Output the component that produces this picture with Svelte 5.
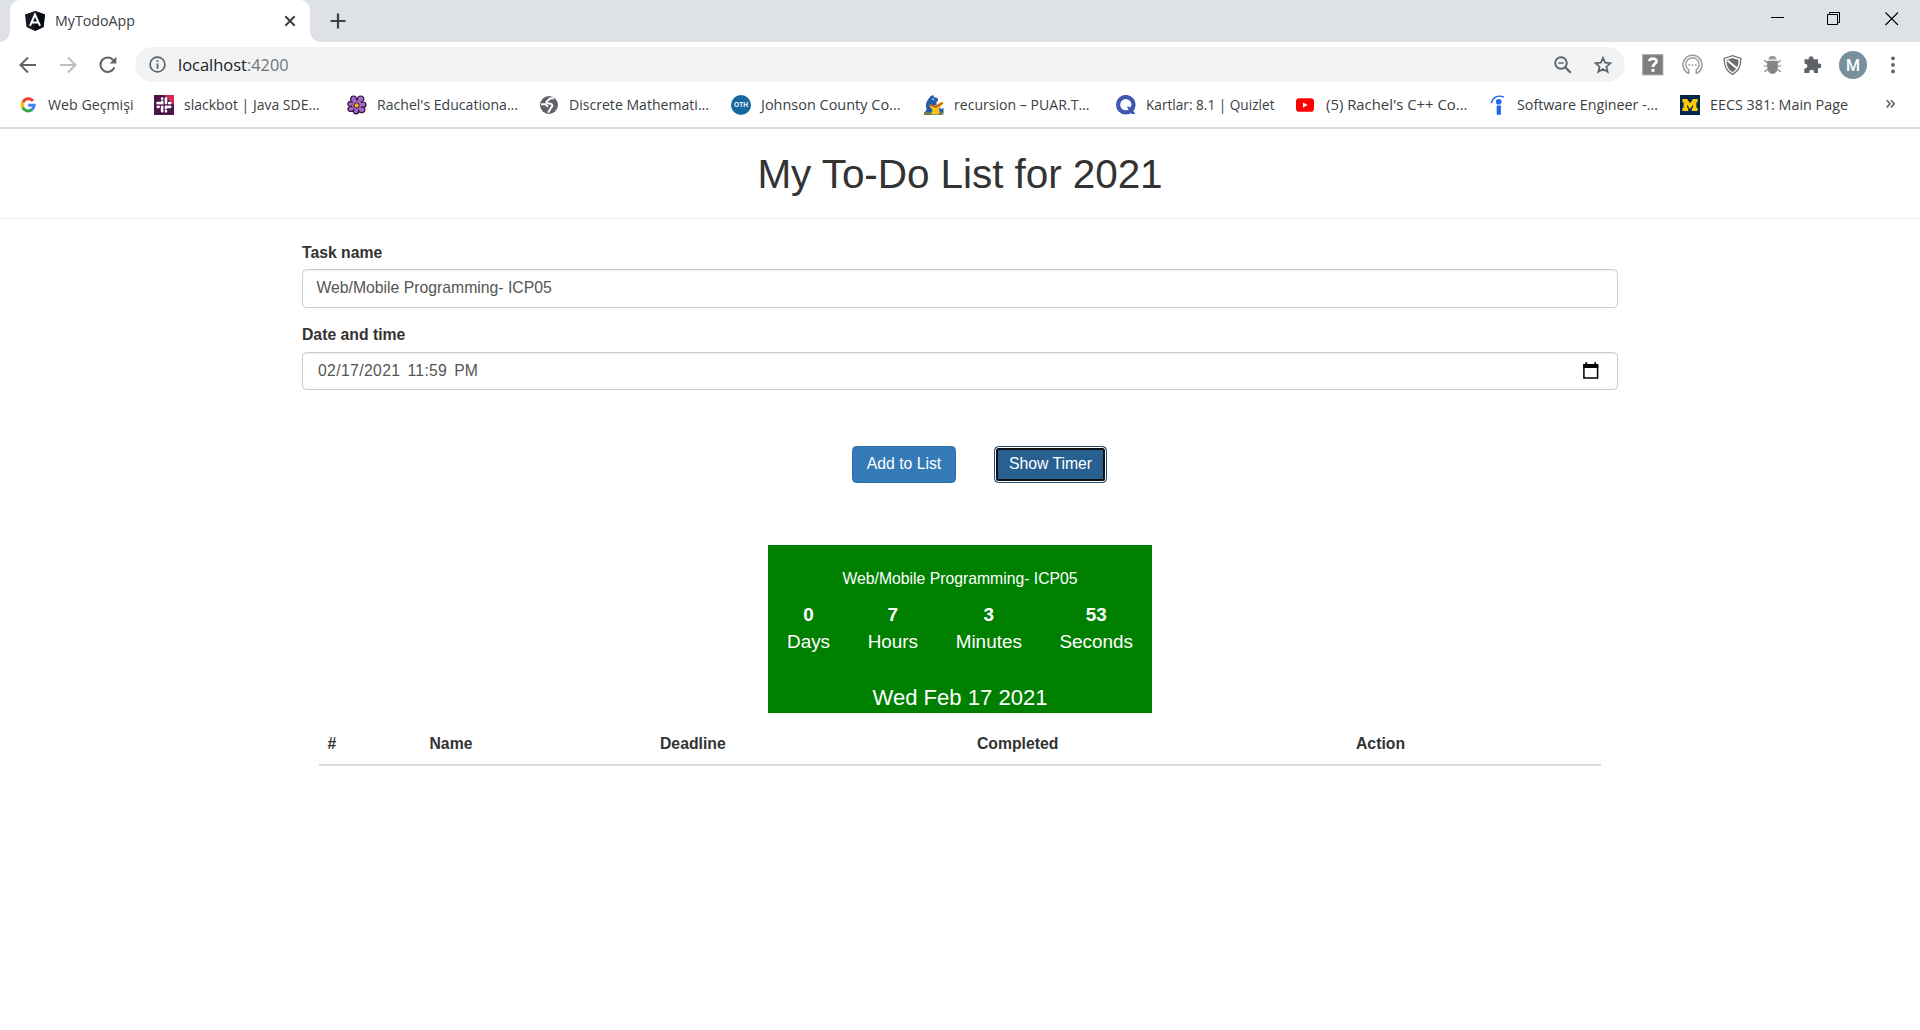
<script>
  const bookmarks = [
    { icon: 'google', text: 'Web Geçmişi', w: 85.5 },
    { icon: 'slack', text: 'slackbot | Java SDE...', w: 135.5 },
    { icon: 'flower', text: "Rachel's Educationa...", w: 141 },
    { icon: 'globe', text: 'Discrete Mathemati...', w: 140 },
    { icon: 'oth', text: 'Johnson County Co...', w: 139.5 },
    { icon: 'gator', text: 'recursion – PUAR.T...', w: 135.5 },
    { icon: 'quizlet', text: 'Kartlar: 8.1 | Quizlet', w: 128.5 },
    { icon: 'youtube', text: "(5) Rachel's C++ Co...", w: 141.5 },
    { icon: 'indeed', text: 'Software Engineer -...', w: 141 },
    { icon: 'michigan', text: 'EECS 381: Main Page', w: 138 }
  ];
  const units = [
    { n: 0, label: 'Days' },
    { n: 7, label: 'Hours' },
    { n: 3, label: 'Minutes' },
    { n: 53, label: 'Seconds' }
  ];
  const task = 'Web/Mobile Programming- ICP05';
</script>

{#snippet label(text, w, cls)}
  <svg class="label {cls}" width={w} height="24"><text x="0" y="17" textLength={w} lengthAdjust="spacingAndGlyphs">{text}</text></svg>
{/snippet}

{#snippet favicon(name)}
  <svg class="fav" width="20" height="20" viewBox="0 0 20 20">
    {#if name === 'google'}
      <g fill="none" stroke-width="3">
        <path d="M15.1 5.9A6 6 0 0 0 5 7.3" stroke="#ea4335" />
        <path d="M5 7.1A6 6 0 0 0 5 12.9" stroke="#fbbc05" />
        <path d="M4.8 12.6A6 6 0 0 0 14.1 14.4" stroke="#34a853" />
        <path d="M10.2 10.2H16.2A6 6 0 0 1 13.8 14.7" stroke="#4285f4" />
      </g>
    {:else if name === 'slack'}
      <rect width="20" height="20" fill="#4a154b" />
      <path d="M10 0H20V10Z" fill="#d72b57" />
      <g stroke="#fff" stroke-width="2.8" stroke-linecap="round">
        <path d="M8.2 3.6V3.7M8.2 7V8.2H3.6M11.9 3.6V8.2M15.3 8.2H16.2M3.8 11.8H4.6M8.2 11.8V16.2M11.9 16.2V16.3M11.9 13V11.8H16.2" fill="none" />
      </g>
      <path d="M10 3V17M3 10H17" stroke="#4a154b" stroke-width=".5" />
    {:else if name === 'flower'}
      <g fill="#a868c8" stroke="#2c1638" stroke-width="1.2">
        <ellipse cx="6.6" cy="4.4" rx="2.9" ry="3.4" /><ellipse cx="13.6" cy="4" rx="3.2" ry="3" />
        <ellipse cx="16" cy="9.7" rx="3" ry="2.7" /><ellipse cx="14.6" cy="14.8" rx="3.3" ry="2.8" />
        <ellipse cx="9" cy="16" rx="2.7" ry="2.9" /><ellipse cx="4" cy="14" rx="3" ry="2.5" />
        <ellipse cx="3.6" cy="9" rx="2.8" ry="2.3" />
      </g>
      <circle cx="9.8" cy="10" r="4.8" fill="#a868c8" />
      <circle cx="9.6" cy="10.4" r="2.6" fill="#f7b512" stroke="#2c1638" />
    {:else if name === 'globe'}
      <circle cx="10" cy="10" r="9" fill="#5f6368" />
      <path d="M14.8 3.2C12.8 3.6 11 2.8 10.2 4.2C9.6 5.6 7.4 5.6 7.4 7.2C7.6 8.8 9.6 8.4 11.6 8.8C14 9.4 13.6 11.4 12.2 12.4C11.2 13.6 11 15.6 9 17.4" fill="none" stroke="#fff" stroke-width="2" />
      <path d="M2 9.2H6.4C7.6 9.8 7.8 11.2 9.2 11.4" fill="none" stroke="#fff" stroke-width="2" />
    {:else if name === 'oth'}
      <circle cx="10" cy="10" r="10" fill="#1668a0" />
      <text x="10" y="12.4" text-anchor="middle" textLength="14" class="oth">OTH</text>
    {:else if name === 'gator'}
      <path d="M2 12C1.5 6 5 4 6.5 1.2L9 0L10.5 2.5C13 2 14.3 3 14 5.5L12 8L17 14L19.5 13V19L16 20H0C0 16 4 16 2 12Z" fill="#245ca8" />
      <path d="M5.5 9.5L10.5 10.5L18.5 6.3L19.5 8.5L15 13L16 19.5H7L8.5 15L6 12Z" fill="#f7c51e" />
      <path d="M6.5 10L12 12L18.5 8" fill="none" stroke="#c04a24" stroke-width="1.5" />
      <path d="M0 18.5H7M15 18.5H19" stroke="#79833f" stroke-width="2.4" />
      <circle cx="9" cy="4.2" r="1" fill="#b9cfe8" />
    {:else if name === 'quizlet'}
      <circle cx="9.8" cy="9.7" r="7.7" fill="none" stroke="#4257b2" stroke-width="4.2" />
      <path d="M10.8 11.8H14.2L19.4 19H15.6Z" fill="#4257b2" />
    {:else if name === 'youtube'}
      <rect x="0" y="3.2" width="18" height="13.6" rx="3.4" fill="#f00" />
      <path d="M7 7.4V12.6L11.7 10Z" fill="#fff" />
    {:else if name === 'indeed'}
      <g fill="#2164f3"><circle cx="11.7" cy="6.7" r="2.8" /><rect x="9.7" y="10.6" width="4.2" height="9.2" rx=".6" /></g>
      <path d="M4.3 8.2C5.2 2.8 10.6-.8 17 2.2" fill="none" stroke="#2164f3" stroke-width="1.4" />
    {:else}
      <rect width="20" height="20" fill="#00274c" />
      <path d="M2.4 4H7L10 8.3L13 4H17.6V7.3H16.4V12.8H17.6V16H11.8V12.8H13V9.8L10 14L7 9.8V12.8H8.2V16H2.4V12.8H3.6V7.3H2.4Z" fill="#ffcb05" />
    {/if}
  </svg>
{/snippet}

<div class="window">
  <header class="chrome">
    <div class="tabs">
      <div class="tab">
        <svg width="20" height="20" viewBox="0 0 20 20">
          <path d="M10 0L20 3.4L18.5 16L10 20L1.5 16L0 3.4Z" fill="#15181f" />
          <path d="M10 0L20 3.4L18.5 16L10 20Z" fill="#070b12" />
          <path d="M5 14.8L10 3.5L15 14.8M7.1 11.4H12.9" fill="none" stroke="#fff" stroke-width="2" />
        </svg>
        {@render label('MyTodoApp', 80, 'tab-title')}
        <svg class="close" width="12" height="12"><path d="M1.3 1.3L10.7 10.7M10.7 1.3L1.3 10.7" stroke="#3c4043" stroke-width="2" /></svg>
      </div>
      <svg class="plus" width="16" height="16"><path d="M8 .5V15.5M.5 8H15.5" stroke="#3c4043" stroke-width="2.2" /></svg>
      <div class="controls">
        <svg width="14" height="14"><path d="M0 6.5H13" stroke="#000" /></svg>
        <svg width="14" height="14"><path d="M.5 2.5H10.5V12.5H.5ZM2.5 2V.5H12.5V10.5H11" fill="none" stroke="#000" /></svg>
        <svg width="14" height="14"><path d="M.5 .5L13 13M13 .5L.5 13" stroke="#000" stroke-width="1.1" /></svg>
      </div>
    </div>

    <div class="toolbar">
      <div class="nav">
        <svg width="18" height="18" viewBox="0 0 18 18"><path d="M17 9H2M9 1.5L1.5 9L9 16.5" fill="none" stroke="#5f6368" stroke-width="2" /></svg>
        <svg width="18" height="18" viewBox="0 0 18 18"><path d="M1 9H16M9 1.5L16.5 9L9 16.5" fill="none" stroke="#bcbec1" stroke-width="2" /></svg>
        <svg width="18" height="18" viewBox="0 0 18 18"><path d="M15.4 11.4A7.2 7.2 0 1 1 14.3 4.2" fill="none" stroke="#5f6368" stroke-width="2.1" /><path d="M17.4 .8V7.6H10.6Z" fill="#5f6368" /></svg>
      </div>
      <div class="omnibox">
        <svg width="17" height="17" viewBox="0 0 17 17"><circle cx="8.5" cy="8.5" r="7.4" fill="none" stroke="#5f6368" stroke-width="1.7" /><path d="M8.5 7.5V12.7M8.5 4.2V6" stroke="#5f6368" stroke-width="1.8" /></svg>
        <span class="url">
          {@render label('localhost', 69, 'host')}{@render label(':4200', 41.5, 'port')}
        </span>
        <svg class="magnify" width="18" height="18" viewBox="0 0 18 18"><circle cx="7" cy="7" r="5.8" fill="none" stroke="#5f6368" stroke-width="1.9" /><path d="M4.3 7H9.7" stroke="#5f6368" stroke-width="1.5" /><path d="M11.2 11.2L16.7 16.7" stroke="#5f6368" stroke-width="2.3" /></svg>
        <svg class="star" width="18" height="18" viewBox="0 0 18 18"><path d="M9 1.8L11.1 6.7L16.5 7.2L12.4 10.7L13.7 16L9 13.1L4.3 16L5.6 10.7L1.5 7.2L6.9 6.7Z" fill="none" stroke="#5f6368" stroke-width="1.7" /></svg>
      </div>
      <div class="extensions">
        <svg width="22" height="22" viewBox="0 0 22 22"><rect x=".8" y=".8" width="20" height="20" fill="#7e7e7e" stroke="#969696" /><path d="M7.3 7.2C7.6 3.6 14.7 3.7 14.5 7.4C14.3 9.8 11 9.7 11 13" fill="none" stroke="#fff" stroke-width="2.7" /><rect x="9.5" y="15" width="3" height="2.8" fill="#fff" /></svg>
        <svg width="22" height="22" viewBox="0 0 22 22"><g fill="none" stroke="#9b9b9b" stroke-width="1.5"><path d="M7 19.6A9.5 9.5 0 1 1 14 19.6" /><path d="M6.8 19.5V16A6.7 6.7 0 1 1 14.2 16V19.5" /></g><path d="M6.5 11H8.2M9.7 11H11.4M12.9 11H14.6" stroke="#999" stroke-width="1.7" /></svg>
        <svg width="22" height="22" viewBox="0 0 22 22"><path d="M10.5 1.6L18.9 4.4C18.9 11.5 17.3 16.8 10.5 20.4C3.7 16.8 2.1 11.5 2.1 4.4Z" fill="#fff" stroke="#737373" stroke-width="1.3" /><path d="M10.5 4L16.5 6C16.5 11.4 15.2 15.3 10.5 18C5.8 15.3 4.5 11.4 4.5 6Z" fill="#6d6d6d" /><path d="M5.5 6.5L15.5 14.7" stroke="#fff" stroke-width="1.8" /></svg>
        <svg width="22" height="22" viewBox="0 0 22 22"><path d="M2.3 6.2L4.8 8.3H7M18.7 6.2L16.2 8.3H15M1.7 12H6M19.3 12H15M2.3 18L4.8 15.8H7M18.7 18L16.2 15.8H15" fill="none" stroke="#8a8a8a" stroke-width="1.2" /><path d="M6.5 5.6C6.5 .6 14.5 .6 14.5 5.6Z" fill="#999" /><path d="M5.4 6.8H15.6C16.5 14 15.6 19.8 10.5 20C5.4 19.8 4.5 14 5.4 6.8Z" fill="#858585" /></svg>
        <svg width="22" height="22" viewBox="0 0 22 22"><path d="M2.5 5.2H6.8V4.2A2.4 2.4 0 0 1 11.5 4.2V5.2H16V9.5H17A2.4 2.4 0 0 1 17 14.3H16V19H12V18A2.3 2.3 0 0 0 7.3 18V19H2.3V14.5H3A2.4 2.4 0 0 0 3 9.7H2.5Z" fill="#5f6368" /></svg>
      </div>
      <div class="avatar">M</div>
      <svg class="dots" width="4" height="18"><g fill="#5f6368"><circle cx="2" cy="2.3" r="1.9" /><circle cx="2" cy="8.9" r="1.9" /><circle cx="2" cy="15.4" r="1.9" /></g></svg>
    </div>

    <nav class="bookmarks">
      {#each bookmarks as b}
        <div class="bookmark">{@render favicon(b.icon)}{@render label(b.text, b.w, 'bm')}</div>
      {/each}
      <svg class="more" width="10" height="10"><path d="M.8 1.2L4 4.8L.8 8.4M5 1.2L8.2 4.8L5 8.4" fill="none" stroke="#5f6368" stroke-width="1.6" /></svg>
    </nav>
  </header>

  <main>
    <h1>My To-Do List for 2021</h1>
    <form class="form">
      <div class="caption">Task name</div>
      <div class="field first">{task}</div>
      <div class="caption second">Date and time</div>
      <div class="field date">
        <div class="datetime"><span>02/17/2021</span><span>11:59</span><span>PM</span></div>
        <svg width="16" height="18" viewBox="0 0 16 18"><path d="M.9 3.5H14.6V16H.9Z" fill="none" stroke="#000" stroke-width="1.5" /><path d="M.2 2H15.3V6H.2ZM2.3 .3H4.1V3H2.3ZM11.3 .3H13.1V3H11.3Z" /></svg>
      </div>
      <div class="buttons">
        <button type="button">Add to List</button>
        <button type="button" class="focused">Show Timer</button>
      </div>
    </form>

    <section class="timer">
      <p class="task">{task}</p>
      <div class="units">
        {#each units as u}
          <div><b>{u.n}</b><span>{u.label}</span></div>
        {/each}
      </div>
      <p class="day">Wed Feb 17 2021</p>
    </section>

    <div class="thead">
      <span>#</span><span>Name</span><span>Deadline</span><span>Completed</span><span>Action</span>
    </div>
  </main>
</div>

<style>
  :global(body) { background: #fff; }
  .window { width: 1920px; height: 1030px; overflow: hidden; background: #fff; box-sizing: border-box; }
  svg { display: block; flex: none; }
  .label { overflow: visible; font-family: 'Open Sans', 'Noto Sans', sans-serif; font-size: 14.5px; fill: #3c4043; }
  .chrome { height: 129px; box-sizing: border-box; border-bottom: 2px solid #dadce0; }

  .tabs { height: 42px; background: #dee1e6; display: flex; align-items: flex-start; padding-left: 10px; }
  .tab { position: relative; width: 300px; height: 42px; box-sizing: border-box; background: #fff; border-radius: 10px 10px 0 0; display: flex; align-items: center; padding: 0 15px; }
  .tab::before, .tab::after { content: ''; position: absolute; bottom: 0; width: 10px; height: 10px; }
  .tab::before { left: -10px; background: radial-gradient(circle at 0 0, transparent 9.5px, #fff 10px); }
  .tab::after { right: -10px; background: radial-gradient(circle at 100% 0, transparent 9.5px, #fff 10px); }
  .tab-title { margin-left: 10px; }
  .close { margin-left: auto; margin-right: -1px; }
  .plus { margin: 13px 0 0 19.5px; }
  .controls { margin-left: auto; display: flex; gap: 42px; padding: 12px 21px 0 0; }
  .controls svg:first-child { margin-top: -1px; }
  .controls svg:nth-child(2) { margin-right: 2px; }

  .toolbar { height: 48px; display: flex; align-items: center; padding: 0 25.5px 0 18.5px; box-sizing: border-box; }
  .nav { display: flex; gap: 22px; width: 116.5px; margin-top: -2px; }
  .omnibox { width: 1490px; height: 35px; margin-top: -3px; border-radius: 18px; background: #f1f3f4; display: flex; align-items: center; box-sizing: border-box; padding: 0 13.5px 0 14px; }
  .url { display: flex; margin-left: 12px; margin-top: 2px; }
  .host, .port { font-size: 17px; }
  .host { fill: #202124; }
  .port { fill: #70757a; }
  .magnify { margin-left: auto; }
  .star { margin-left: 22px; }
  .extensions { display: flex; gap: 18px; margin: -2px 0 0 17px; }
  .avatar { width: 28px; height: 28px; border-radius: 50%; background: #78909c; color: #fff; font: 500 16px/29px Roboto, sans-serif; text-align: center; margin: -2px 0 0 15px; }
  .dots { margin: -2px 0 0 auto; }

  .bookmarks { height: 37px; display: grid; grid-template-columns: 136px 192.5px 192px 192.5px 192.5px 192.5px 179.5px 191.5px 192.5px 206px auto; padding-left: 18px; align-items: start; }
  .bookmark { display: flex; gap: 10px; align-items: center; margin-top: 3px; }
  .more { margin-top: 9px; }
  .oth { font: bold 6.5px 'Liberation Sans', sans-serif; fill: #fff; }

  main { font-family: 'Liberation Sans', Arial, sans-serif; font-size: 15.75px; color: #333; }
  h1 { height: 90px; box-sizing: border-box; margin: 0; border-bottom: 1px solid #eee; font-size: 40.5px; font-weight: 400; line-height: 90px; letter-spacing: -.07px; text-align: center; }
  .form { width: 1316px; margin: 0 auto; padding-top: 24px; }
  .caption { height: 26px; line-height: 20px; font-weight: 700; }
  .second { margin-top: 17px; height: 27px; }
  .field { box-sizing: border-box; height: 39px; border: 1px solid #ccc; border-radius: 4.5px; box-shadow: inset 0 1px 1px rgba(0, 0, 0, .075); padding: 0 14px; color: #555; line-height: 36px; display: flex; justify-content: space-between; align-items: center; }
  .first { padding: 0 13.5px 2px; }
  .date { height: 38px; padding: 0 18px 0 15px; }
  .datetime { display: flex; gap: 7px; }
  .datetime span:first-child { letter-spacing: .36px; }
  .datetime span:nth-child(2) { letter-spacing: .3px; }
  .buttons { display: flex; justify-content: center; gap: 38px; margin: 56px 0 0 39px; }
  button { width: 104px; height: 37px; padding: 0 0 2px; box-sizing: border-box; border: 1px solid #2e6da4; border-radius: 4.5px; background: #337ab7; color: #fff; font: 15.75px/33px 'Liberation Sans', Arial, sans-serif; }
  .focused { width: 113px; border-color: #204d74; background: #286090; box-shadow: inset 0 0 0 1px #fff, inset 0 0 0 3px #101010; }

  .timer { width: 384px; height: 168px; margin: 62px auto 0; background: green; color: #fff; text-align: center; overflow: hidden; }
  .timer p { margin: 0; }
  .timer .task { margin-top: 23px; line-height: 22px; }
  .units { display: flex; justify-content: space-between; padding: 0 19px; margin-top: 11px; font-size: 18.9px; line-height: 27px; }
  .units div { display: flex; flex-direction: column; }
  .timer .day { margin-top: 28px; font-size: 22.05px; line-height: 30px; }

  .thead { width: 1282px; height: 53px; box-sizing: border-box; margin: 0 auto; border-bottom: 2px solid #ddd; padding: 21px 0 0 8.5px; display: grid; grid-template-columns: 102px 230.5px 317px 379px auto; font-weight: 700; line-height: 20px; }
</style>
